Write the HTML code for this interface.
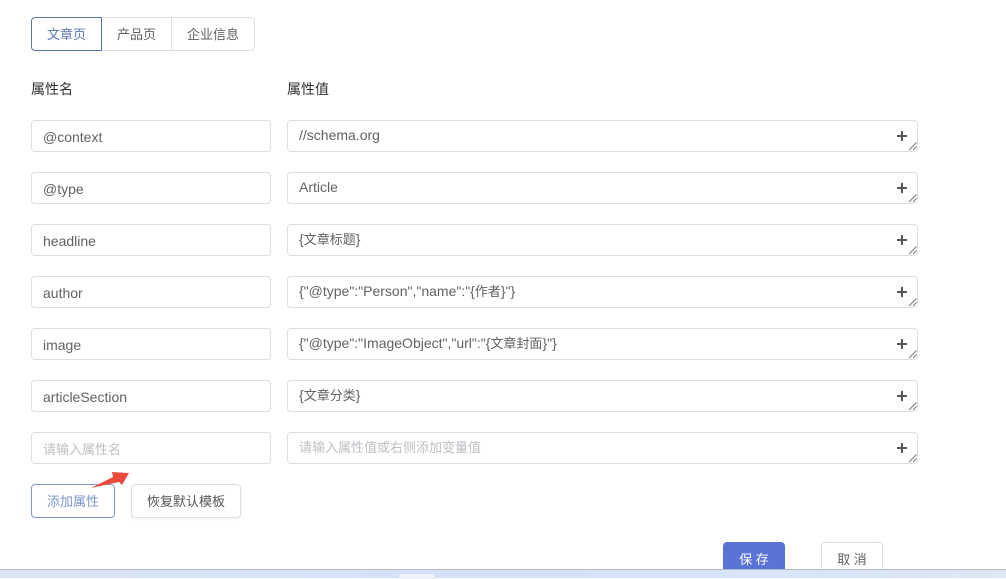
<!DOCTYPE html>
<html lang="zh">
<head>
<meta charset="utf-8">
<style>
html,body{margin:0;padding:0;background:#fff}
body{width:1006px;height:578px;overflow:hidden;position:relative;font-family:"Liberation Sans","Noto Sans CJK SC",sans-serif;font-size:14px;color:#606266}
.a{position:absolute;box-sizing:border-box}
.box{border:1px solid #dcdfe6;border-radius:4px;background:#fff;height:32px;white-space:nowrap}
.l{left:31px;width:240px;padding-left:11px;line-height:33px}
.r{left:287px;width:631px;padding-left:11px;line-height:29px}
.ph{color:#bdbfc4;font-size:13px}
.c{font-size:13px}
.t{top:17px;height:34px;line-height:33px;text-align:center;font-size:13px;border:1px solid #dcdfe6;background:#fff}
.lab{top:80px;line-height:18px;color:#303133}
.btn{border:1px solid #dcdfe6;border-radius:4px;text-align:center;background:#fff;font-size:13px}
svg{position:absolute}
</style>
</head>
<body>
<div class="a t" style="left:31px;width:71px;color:#5a76b0;border-color:#5a76b0;border-radius:4px 0 0 4px;z-index:1">文章页</div>
<div class="a t" style="left:101px;width:71px;border-radius:0">产品页</div>
<div class="a t" style="left:171px;width:84px;border-radius:0 4px 4px 0">企业信息</div>

<div class="a lab" style="left:31px">属性名</div>
<div class="a lab" style="left:287px">属性值</div>

<div class="a box l" style="top:120px">@context</div>
<div class="a box r" style="top:120px">//schema.org</div>
<div class="a box l" style="top:172px">@type</div>
<div class="a box r" style="top:172px">Article</div>
<div class="a box l" style="top:224px">headline</div>
<div class="a box r" style="top:224px">{<span class="c">文章标题</span>}</div>
<div class="a box l" style="top:276px">author</div>
<div class="a box r" style="top:276px">{"@type":"Person","name":"{<span class="c">作者</span>}"}</div>
<div class="a box l" style="top:328px">image</div>
<div class="a box r" style="top:328px">{"@type":"ImageObject","url":"{<span class="c">文章封面</span>}"}</div>
<div class="a box l" style="top:380px">articleSection</div>
<div class="a box r" style="top:380px">{<span class="c">文章分类</span>}</div>
<div class="a box l ph" style="top:432px">请输入属性名</div>
<div class="a box r ph" style="top:432px">请输入属性值或右侧添加变量值</div>

<svg style="left:0;top:0" width="1006" height="578">
<defs>
<g id="p">
<path d="M897 16h10M902 11v10" stroke="#555" stroke-width="2" fill="none"/>
<path d="M909 30l7.500-7.500M913 30l3.500-3.500" stroke="#777" stroke-width="1" fill="none"/>
</g>
</defs>
<use href="#p" y="120"/><use href="#p" y="172"/><use href="#p" y="224"/><use href="#p" y="276"/><use href="#p" y="328"/><use href="#p" y="380"/><use href="#p" y="432"/>
</svg>

<div class="a btn" style="left:31px;top:484px;width:84px;height:34px;line-height:33px;color:#7b95c9;border-color:#7f9ac9">添加属性</div>
<div class="a btn" style="left:131px;top:484px;width:110px;height:34px;line-height:33px;color:#555;box-shadow:0 1px 3px rgba(0,0,0,.06)">恢复默认模板</div>

<svg style="left:0;top:0;z-index:3" width="1006" height="578">
<path d="M91 488L113 477L112 472L129 473L122 485L119 482Z" fill="#ea4a3c"/>
</svg>

<div class="a btn" style="left:723px;top:542px;width:62px;height:34px;line-height:33px;background:#5a73d6;border-color:#5a73d6;color:#fff">保 存</div>
<div class="a btn" style="left:821px;top:542px;width:62px;height:34px;line-height:33px;color:#606266">取 消</div>

<div class="a" style="left:0;top:569px;width:1006px;height:9px;border-top:1px solid #b4b8c0;background:linear-gradient(90deg,#dbe4f4 0,#d3e1f8 45%,#d6e3fa 70%,#dfe6f6 100%);z-index:4">
<div class="a" style="left:399px;top:4px;width:36px;height:5px;background:#eef1f9;border-radius:2px 2px 0 0"></div>
</div>
</body>
</html>
